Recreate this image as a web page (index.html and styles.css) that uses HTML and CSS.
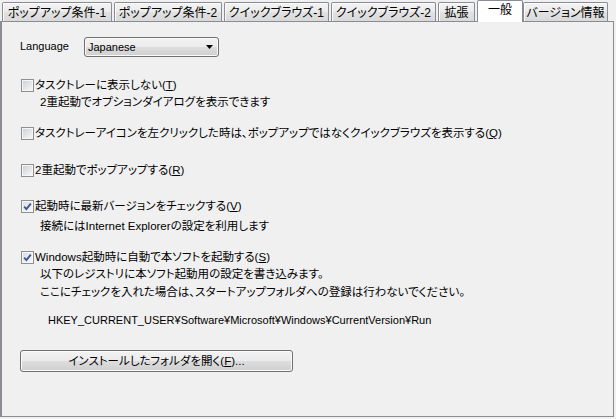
FILE: index.html
```html
<!DOCTYPE html>
<html lang="ja">
<head>
<meta charset="utf-8">
<title>設定 - 一般</title>
<link rel="stylesheet" href="styles.css">
</head>
<body>
<div class="window">
  <div class="tabs">
    <div class="tab tab-w1">ポップアップ条件-1</div>
    <div class="tab tab-w2">ポップアップ条件-2</div>
    <div class="tab tab-w3">クイックブラウズ-1</div>
    <div class="tab tab-w4">クイックブラウズ-2</div>
    <div class="tab tab-w5">拡張</div>
    <div class="tab tab-active tab-w6">一般</div>
    <div class="tab tab-w7">バージョン情報</div>
  </div>
  <div class="panel">
    <div class="lang-row">
      <span class="lang-label">Language</span>
      <div class="select">
        <span class="select-text">Japanese</span>
        <svg class="select-arrow" width="7" height="4" viewBox="0 0 7 4"><path d="M0 0H7L3.5 4Z" fill="#000"/></svg>
      </div>
    </div>

    <div class="check row-cb1">
      <span class="box"></span>
      <span>タスクトレーに表示しない(<u>T</u>)</span>
    </div>
    <div class="note row-n1">2重起動でオプションダイアログを表示できます</div>

    <div class="check row-cb2">
      <span class="box"></span>
      <span>タスクトレーアイコンを左クリックした時は、ポップアップではなくクイックブラウズを表示する(<u>Q</u>)</span>
    </div>

    <div class="check row-cb3">
      <span class="box"></span>
      <span>2重起動でポップアップする(<u>R</u>)</span>
    </div>

    <div class="check row-cb4">
      <span class="box box-checked"><svg width="9" height="9" viewBox="0 0 9 9"><path d="M1.2 4.6L3.4 7L7.8 1.6" fill="none" stroke="#3b5393" stroke-width="1.8"/></svg></span>
      <span>起動時に最新バージョンをチェックする(<u>V</u>)</span>
    </div>
    <div class="note row-n4">接続にはInternet Explorerの設定を利用します</div>

    <div class="check row-cb5">
      <span class="box box-checked"><svg width="9" height="9" viewBox="0 0 9 9"><path d="M1.2 4.6L3.4 7L7.8 1.6" fill="none" stroke="#3b5393" stroke-width="1.8"/></svg></span>
      <span>Windows起動時に自動で本ソフトを起動する(<u>S</u>)</span>
    </div>
    <div class="note row-l1">以下のレジストリに本ソフト起動用の設定を書き込みます。</div>
    <div class="note row-l2">ここにチェックを入れた場合は、スタートアップフォルダへの登録は行わないでください。</div>
    <div class="note note-key row-key">HKEY_CURRENT_USER¥Software¥Microsoft¥Windows¥CurrentVersion¥Run</div>

    <div class="button row-btn">インストールしたフォルダを開く(<u>F</u>)...</div>
  </div>
</div>
</body>
</html>
```

FILE: styles.css
```css
* { box-sizing: border-box; }

html, body {
  margin: 0;
  padding: 0;
  background: #f0f0f0;
}

body {
  width: 616px;
  height: 419px;
  overflow: hidden;
  font-family: "Liberation Sans", "Noto Sans CJK JP", sans-serif;
  font-size: 11.5px;
  font-feature-settings: "palt";
  color: #000;
}

u { text-decoration: underline; text-underline-offset: 1px; }

.window {
  width: 614px;
}

/* ---------- tabs ---------- */
.tabs {
  display: flex;
  align-items: flex-end;
  gap: 2px;
  height: 21px;
  padding-left: 2px;
}

.tab {
  position: relative;
  height: 19px;
  padding-top: 2px;
  line-height: 16px;
  font-size: 12px;
  text-align: center;
  white-space: nowrap;
  border: 1px solid #898c95;
  border-bottom: none;
  border-radius: 2px 2px 0 0;
  background: linear-gradient(#f3f3f3, #ebebeb 50%, #e2e2e2 51%, #d9d9d9);
  box-shadow: inset 1px 1px 0 #fcfcfc;
}

.tab-active {
  height: 22px;
  margin-bottom: -1px;
  margin-right: -2px;
  padding-top: 0;
  line-height: 18px;
  background: #fff;
  box-shadow: none;
  z-index: 2;
}

.tab-w1 { width: 110px; }
.tab-w2 { width: 108px; }
.tab-w3 { width: 105px; }
.tab-w4 { width: 105px; }
.tab-w5 { width: 37px; }
.tab-w6 { width: 46px; }
.tab-w7 { width: 85px; }

/* ---------- panel ---------- */
.panel {
  position: relative;
  height: 396px;
  border: 1px solid #898c95;
  border-left-width: 2px;
  background: #f0f0f0;
  padding: 15px 0 0 19px;
  display: flex;
  flex-direction: column;
  align-items: flex-start;
}

.lang-row {
  display: flex;
  align-items: center;
  height: 20px;
  font-size: 11px;
}

.lang-label {
  width: 64px;
  margin-left: -1px;
  line-height: 16px;
  margin-top: -2px;
}

.select {
  width: 135px;
  height: 20px;
  border: 1px solid #707070;
  border-radius: 3px;
  background: linear-gradient(#f2f2f2, #ebebeb 50%, #dddddd 51%, #cfcfcf);
  box-shadow: inset 0 0 0 1px #fafafa;
  display: flex;
  align-items: center;
  justify-content: space-between;
  padding: 0 5px 0 3px;
}

.select-text { line-height: 16px; }

.select-arrow { display: block; }

.check {
  display: flex;
  align-items: center;
  gap: 1px;
  height: 16px;
  line-height: 16px;
  white-space: nowrap;
}

.box {
  flex: none;
  width: 13px;
  height: 13px;
  border: 1px solid #8e8f8f;
  padding: 1px;
  background: linear-gradient(135deg, #cfd1d4, #f7f7f7) content-box, #f6f6f6;
  box-shadow: inset 0 0 0 1px #f6f6f6;
}

.box-checked {
  background: linear-gradient(135deg, #d6dbe6, #f8f9fb) content-box, #f6f6f6;
  display: flex;
  align-items: center;
  justify-content: center;
  padding: 0;
}

.box-checked svg { display: block; }

.note {
  height: 16px;
  line-height: 16px;
  margin-left: 19px;
  white-space: nowrap;
}

.note-key { margin-left: 27px; font-size: 11px; }

.row-cb1 { margin-top: 20px; }
.row-n1 { margin-top: 1px; }
.row-cb2 { margin-top: 15px; }
.row-cb3 { margin-top: 21px; }
.row-cb4 { margin-top: 20px; }
.row-n4 { margin-top: 4px; }
.row-cb5 { margin-top: 15px; }
.row-l1 { margin-top: 1px; }
.row-l2 { margin-top: 2px; }
.row-key { margin-top: 12px; }

.button {
  margin-top: 22px;
  margin-left: -1px;
  width: 273px;
  height: 22px;
  line-height: 20px;
  text-align: center;
  border: 1px solid #707070;
  border-radius: 3px;
  background: linear-gradient(#f2f2f2, #ebebeb 50%, #dddddd 51%, #cfcfcf);
  box-shadow: inset 0 0 0 1px #fafafa;
  white-space: nowrap;
}
```
